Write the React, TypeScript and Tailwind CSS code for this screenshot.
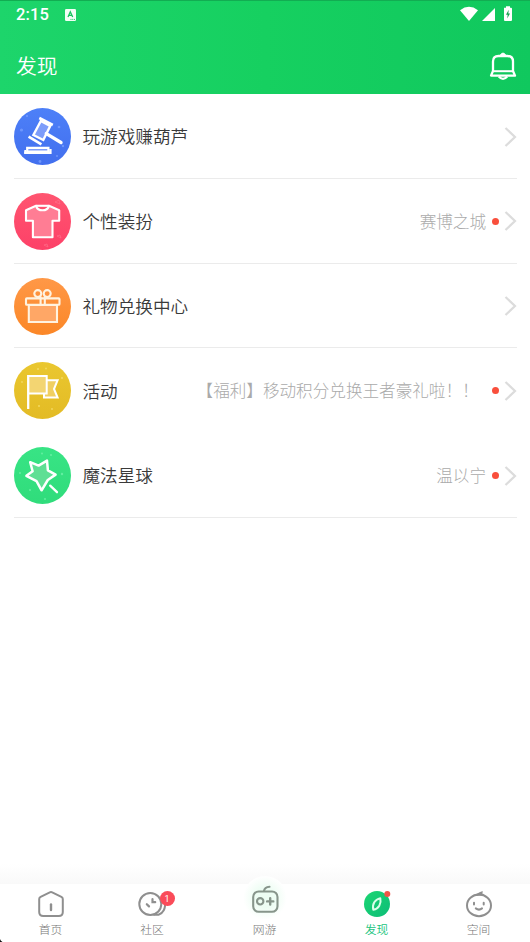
import React from 'react';

const GavelIcon = () => (
  <svg width="57" height="57" viewBox="0 0 57 57" fill="none" stroke="#fff" strokeWidth="2.4">
    <circle cx="28.5" cy="28.5" r="28.5" fill="url(#blue)" stroke="none" />
    <g fill="#7ea2ff" fillOpacity=".7" stroke="none">
      <circle cx="7.5" cy="22" r="1.6" />
      <circle cx="13" cy="8" r="1.1" />
      <circle cx="45" cy="19" r="1.3" />
      <circle cx="49" cy="38" r="1.2" />
      <circle cx="26" cy="53.5" r="1.4" />
      <circle cx="43" cy="48" r="1" />
    </g>
    <path d="M26.8 13 36.2 18 29.3 32 19.4 27Z" fill="#7d9dfa" />
    <path d="M25.3 10 38.8 17M14.6 28.6 27.4 36.4" strokeWidth="2.7" />
    <path d="M32.3 25.6 47 34.5" strokeWidth="3.4" strokeLinecap="round" />
    <path d="M13.2 39.8H34.4V43.5H13.2Z" fill="#7d9dfa" strokeWidth="2.2" />
    <path d="M10.2 44.8H36.4V41" strokeWidth="2.4" />
    <path d="M11.3 45.5V42" strokeWidth="2" />
  </svg>
);

const ShirtIcon = () => (
  <svg width="57" height="57" viewBox="0 0 57 57" fill="none" stroke="#fff" strokeWidth="2.1" strokeLinejoin="round">
    <circle cx="28.5" cy="28.5" r="28.5" fill="url(#pink)" stroke="none" />
    <path d="M41 9l4-2 1 4zM30 52l3-1 1 3zM43 43l3-1 1 3z" stroke="#ff7b92" strokeWidth=".5" />
    <path
      d="M22 12.8 12 17.2V27.8H18.9V44.2H38.5V27.8H45.2V17.2L35 12.8C33 18.8 24 18.8 22 12.8Z"
      fill="#ff7d94"
    />
    <path d="M22 12.8H35" />
  </svg>
);

const GiftIcon = () => (
  <svg width="57" height="57" viewBox="0 0 57 57" fill="none" stroke="#fff3e0" strokeWidth="2.1">
    <circle cx="28.5" cy="28.5" r="28.5" fill="url(#orange)" stroke="none" />
    <path d="M14.8 27H43V44H14.8Z" fill="#ffa766" />
    <rect x="12" y="20.4" width="33.5" height="6.3" rx=".8" />
    <circle cx="23.8" cy="15.6" r="3.5" />
    <circle cx="33.2" cy="15.6" r="3.5" />
    <path d="M26.6 18.5V26.5M30.8 18.5V26.5" />
  </svg>
);

const FlagIcon = () => (
  <svg width="57" height="57" viewBox="0 0 57 57" fill="none" stroke="#fff" strokeWidth="2">
    <circle cx="28.5" cy="28.5" r="28.5" fill="url(#yellow)" stroke="none" />
    <g fill="#f3d960" stroke="none">
      <circle cx="24" cy="7" r="1.1" />
      <circle cx="32" cy="6.5" r=".9" />
      <circle cx="8" cy="20" r=".9" />
      <circle cx="48" cy="16" r="1" />
      <circle cx="25" cy="44" r="1" />
      <circle cx="38" cy="47" r=".9" />
    </g>
    <path d="M33 18.2H43.6L40 27 43.6 35.6H30V31.5" fill="#f0cf62" />
    <path d="M14.2 14H32.7V31.6H14.2" fill="#f3d572" />
    <path d="M14.2 13V47" strokeWidth="2.3" />
  </svg>
);

const StarIcon = () => (
  <svg width="57" height="57" viewBox="0 0 57 57" fill="none" stroke="#fff" strokeWidth="2.5" strokeLinejoin="round" strokeLinecap="round">
    <circle cx="28.5" cy="28.5" r="28.5" fill="url(#mint)" stroke="none" />
    <g fill="#63eda0" stroke="none">
      <circle cx="28" cy="6.5" r="1" />
      <circle cx="37" cy="8" r="1.1" />
      <circle cx="6" cy="26" r="1" />
      <circle cx="48" cy="27" r="1.2" />
      <circle cx="16" cy="43" r="1" />
      <circle cx="31" cy="52" r="1" />
    </g>
    <path
      d="M16.2 15.2 24.6 18.6 33 13.6 33.9 23.3 41.6 27.6 33.8 33 27.6 43.3 22.5 34.2 12.4 28.8 18.6 24.2Z"
      fill="#5fdf94"
    />
    <path d="M36.2 38.6 43 45.2" strokeWidth="2.3" />
  </svg>
);

const HomeTabIcon = () => (
  <svg width="28" height="28" viewBox="0 0 28 28" fill="none" stroke="#8f8f8f" strokeWidth="2" strokeLinecap="round" strokeLinejoin="round">
    <path d="M12.8 2.3Q14 1.7 15.2 2.3L24.4 6.8Q25.8 7.6 25.8 9V22Q25.8 26 21.8 26H6.2Q2.2 26 2.2 22V9Q2.2 7.6 3.6 6.8Z" />
    <path d="M14 14.5V20" strokeWidth="2.4" />
  </svg>
);

const CommunityTabIcon = () => (
  <svg width="28" height="28" viewBox="0 0 28 28" fill="none" stroke="#8f8f8f" strokeWidth="2" strokeLinecap="round">
    <circle cx="12.3" cy="14" r="11" />
    <path d="M20.5 24.8C25 23.4 28 18.5 26.8 12M16 24.8H20.5" />
    <path d="M8.8 14.2 11 16.4M14.5 9.2V12.2H17.2" strokeWidth="2.2" />
  </svg>
);

const GameTabIcon = () => (
  <svg width="28" height="28" viewBox="0 0 28 28" fill="none" stroke="#87958b" strokeWidth="2.1" strokeLinecap="round">
    <rect x="2.2" y="6.5" width="24.3" height="20.3" rx="5.5" />
    <path d="M13 6Q13.6 1.9 18.5 1.7" />
    <circle cx="9.2" cy="16.3" r="3.2" />
    <path d="M19.2 13.3V19.5M16.1 16.4H22.3" strokeWidth="2.4" />
  </svg>
);

const DiscoverTabIcon = () => (
  <svg width="28" height="28" viewBox="0 0 28 28" fill="none">
    <circle cx="14" cy="14" r="13" fill="url(#tabGreen)" />
    <path d="M10.3 19.8C9 14.2 11.9 9.4 17.3 8.2C18.6 13.8 15.7 18.6 10.3 19.8Z" stroke="#d9ffe9" strokeWidth="2" strokeLinejoin="round" />
    <circle cx="24.3" cy="4" r="3" fill="#ef5547" />
  </svg>
);

const SpaceTabIcon = () => (
  <svg width="28" height="28" viewBox="0 0 28 28" fill="none" stroke="#8f8f8f" strokeWidth="2" strokeLinecap="round">
    <ellipse cx="14" cy="15.4" rx="12" ry="10.9" />
    <path d="M8.6 5.6C12 4.8 14 2.6 17.3 1.8L16.4 3.6 18.2 4.6Z" fill="#8f8f8f" strokeWidth="1.2" strokeLinejoin="round" />
    <path d="M9 12.8V14.6M18.7 12.8V14.6M10.8 18.4Q14 20.8 17 18.4" />
  </svg>
);

const BellIcon = () => (
  <svg width="28" height="30" viewBox="0 0 28 30" fill="none" stroke="#fff" strokeWidth="2.3" strokeLinejoin="round">
    <path d="M4 19V9.5Q4 4 9.5 4H18.5Q24 4 24 9.5V19L26 23.6H2L4 19Z" />
    <path d="M4 19.2H24" strokeWidth="2" />
    <path d="M11 3.5Q14-1.4 17 3.5Z" fill="#fff" strokeWidth="1" />
    <path d="M9.8 24.5Q14 29.2 18.2 24.5" />
  </svg>
);

const Gradients = () => (
  <svg width="0" height="0" className="absolute">
    <defs>
      <linearGradient id="blue" x1="0" y1="0" x2="0" y2="1">
        <stop stopColor="#4d80f8" />
        <stop offset="1" stopColor="#426fee" />
      </linearGradient>
      <linearGradient id="pink" x1="0" y1="0" x2="0" y2="1">
        <stop stopColor="#ff5570" />
        <stop offset="1" stopColor="#fd4168" />
      </linearGradient>
      <linearGradient id="orange" x1="0" y1="0" x2="0" y2="1">
        <stop stopColor="#ff9847" />
        <stop offset="1" stopColor="#fb8727" />
      </linearGradient>
      <linearGradient id="yellow" x1="0" y1="0" x2="0" y2="1">
        <stop stopColor="#eac72f" />
        <stop offset="1" stopColor="#e3bb25" />
      </linearGradient>
      <linearGradient id="mint" x1="0" y1="0" x2="0" y2="1">
        <stop stopColor="#38e485" />
        <stop offset="1" stopColor="#30dc7b" />
      </linearGradient>
      <linearGradient id="tabGreen" x1="0" y1="0" x2="1" y2="1">
        <stop stopColor="#1cd672" />
        <stop offset="1" stopColor="#0cbd78" />
      </linearGradient>
    </defs>
  </svg>
);

interface Entry {
  title: string;
  icon: React.ReactNode;
  detail?: string;
  dot?: boolean;
  divider?: boolean;
}

const ENTRIES: Entry[] = [
  { title: '玩游戏赚葫芦', icon: <GavelIcon />, divider: true },
  { title: '个性装扮', icon: <ShirtIcon />, detail: '赛博之城', dot: true, divider: true },
  { title: '礼物兑换中心', icon: <GiftIcon />, divider: true },
  { title: '活动', icon: <FlagIcon />, detail: '【福利】移动积分兑换王者豪礼啦！！\u00a0\u00a0', dot: true },
  { title: '魔法星球', icon: <StarIcon />, detail: '温以宁', dot: true, divider: true },
];

const EntryRow: React.FC<{ entry: Entry }> = ({ entry }) => (
  <li className={`ml-3.5 mr-[13px] flex h-[84.75px] items-center border-b pt-[1.5px] ${entry.divider ? 'border-[#ebebeb]' : 'border-transparent'}`}>
    <div className="shrink-0">{entry.icon}</div>
    <span className="ml-[11.5px] text-[17.6px] font-[350] text-[#3a3a3a]">{entry.title}</span>
    <span className="ml-auto whitespace-pre text-[16.6px] font-light text-[#aaa]">{entry.detail}</span>
    {entry.dot && <span className="ml-1.5 h-[7px] w-[7px] rounded-full bg-[#f94f3c]" />}
    <svg className="ml-[5px]" width="13" height="20" viewBox="0 0 13 20" fill="none" stroke="#dcdcdc" strokeWidth="2.2">
      <path d="M1.5 1 11 10 1.5 19" />
    </svg>
  </li>
);

export default function App() {
  return (
    <div className="relative flex h-[942px] w-[530px] flex-col overflow-hidden bg-white font-['Noto_Sans_CJK_SC',sans-serif]">
      <Gradients />

      <header className="h-[94px] shrink-0 border-t border-[#12ad52] bg-linear-to-r from-[#1dd56b] via-[#16d060] to-[#10c85e] text-white">
        {/* Status bar */}
        <div className="flex h-[27px] items-center pl-4 pr-4 font-[Roboto,sans-serif]">
          <span className="mt-0.5 text-[16.5px] font-medium tracking-[0.1px]">2:15</span>
          <svg className="ml-4" width="11" height="12" viewBox="0 0 11 12">
            <rect width="11" height="12" rx="1.2" fill="#f2fff7" />
            <path d="M3 8 5.3 2.8 7.7 8M3.8 6.4H6.9" fill="none" stroke="#18c45f" strokeWidth="1.3" />
            <path d="M5.5 10.4H10" stroke="#18c45f" strokeWidth="1" strokeDasharray="1 .8" />
          </svg>
          <svg className="-mt-px ml-auto" width="54" height="16" viewBox="0 0 54 16" fill="#fff">
            <path d="M0 4.2Q9-2.6 18 4.2L9 15Z" />
            <path d="M22 15H35V2Z" />
            <path d="M44 1.7H46V.3H50V1.7H51Q52 1.7 52 2.7V14Q52 15 51 15H45Q44 15 44 14Z" />
            <path d="M48.7 3.8 46 8.7H47.7L47.2 12.5 50 7.6H48.3Z" fill="#14a04e" />
          </svg>
        </div>
        <div className="flex h-[66px] items-center justify-between pl-4 pr-[13px]">
          <h1 className="mt-[9px] text-[20.8px] font-[350]">发现</h1>
          <div className="mt-[11px]">
            <BellIcon />
          </div>
        </div>
      </header>

      <ul className="flex-1">
        {ENTRIES.map((entry) => (
          <EntryRow key={entry.title} entry={entry} />
        ))}
      </ul>

      <div className="h-5 shrink-0 bg-linear-to-b from-white to-[#f9f9f9]" />

      <nav className="flex h-[58px] shrink-0 text-[11.8px] font-light leading-4 text-[#777]">
        <div className="flex w-[101px] flex-col items-center pt-1.5">
          <HomeTabIcon />
          <span className="mt-[3px]">首页</span>
        </div>
        <div className="relative flex w-[102px] flex-col items-center pt-1.5">
          <CommunityTabIcon />
          <span className="absolute left-[58.5px] top-[7px] flex h-[15px] w-[15px] items-center justify-center rounded-full bg-[#fa4b59] font-[Roboto,sans-serif] text-[9px] font-normal text-white">
            1
          </span>
          <span className="mt-[3px]">社区</span>
        </div>
        <div className="relative flex w-[123px] flex-col items-center pt-px">
          <div className="absolute -top-2 left-10 h-11 w-11 rounded-full bg-[radial-gradient(circle,#edfdf3_30%,#ffffff_70%)]" />
          <div className="relative">
            <GameTabIcon />
          </div>
          <span className="relative mt-2">网游</span>
        </div>
        <div className="flex w-[101px] flex-col items-center pt-1.5">
          <DiscoverTabIcon />
          <span className="mt-[3px] font-[350] text-[#16c47c]">发现</span>
        </div>
        <div className="flex w-[103px] flex-col items-center pt-1.5">
          <SpaceTabIcon />
          <span className="mt-[3px]">空间</span>
        </div>
      </nav>

      {/* Rounded screen corner */}
      <svg className="absolute bottom-0 left-0" width="3" height="4" viewBox="0 0 3 4">
        <path d="M0 1Q.5 3 2.5 4H0Z" fill="#111" />
      </svg>
    </div>
  );
}
